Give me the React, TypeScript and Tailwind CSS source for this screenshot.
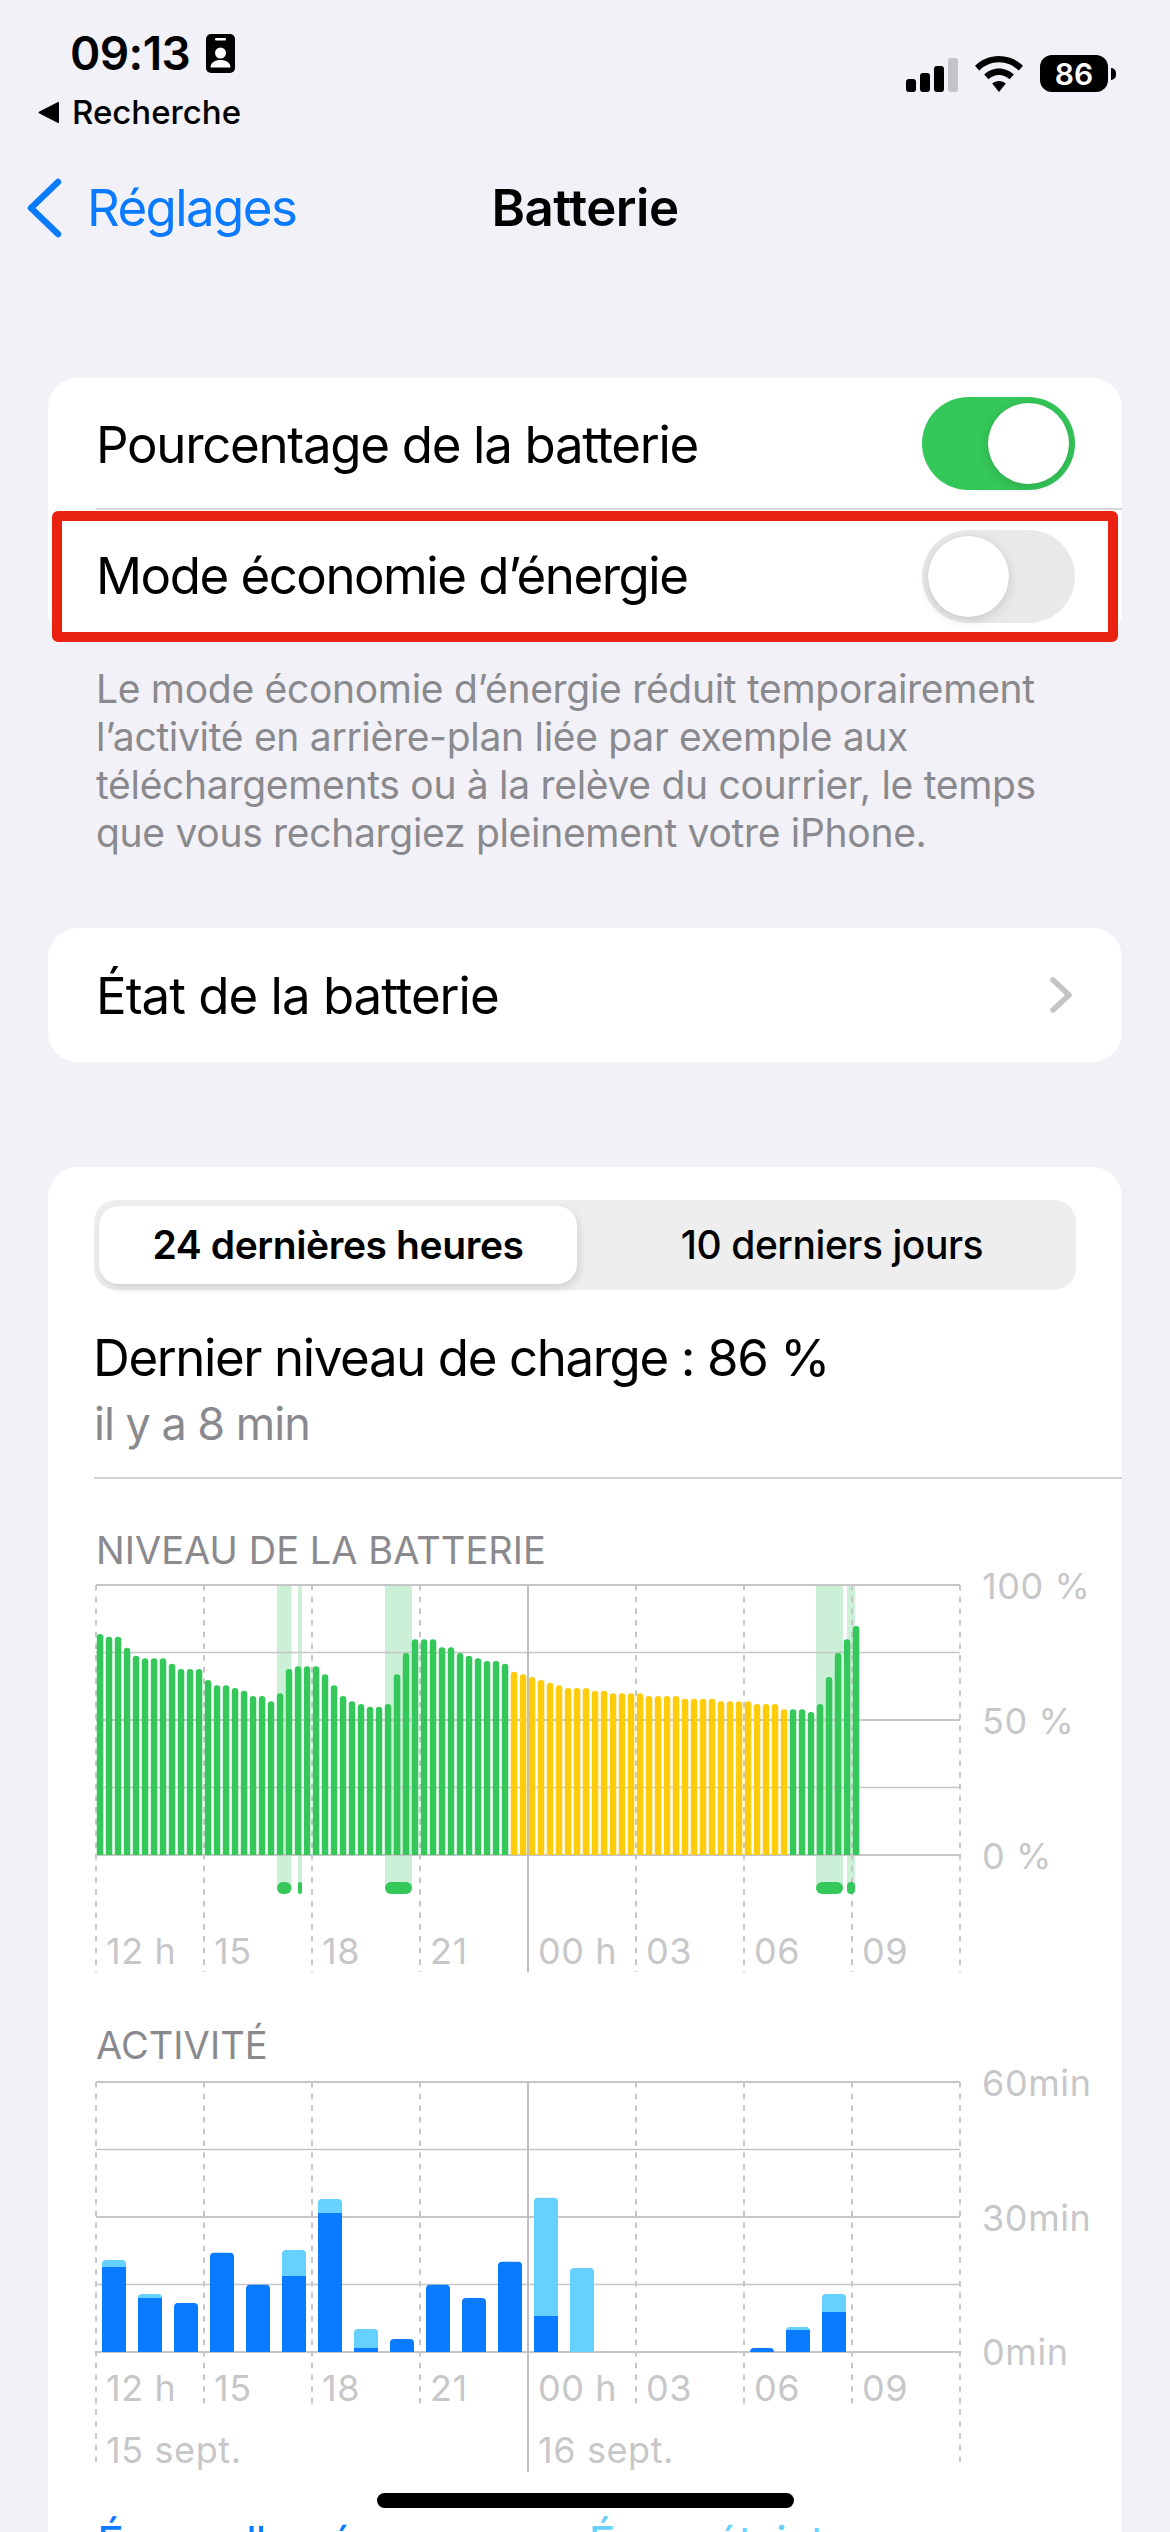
import React from 'react';

const BATTERY_TOPS = [
  342, 350, 350, 383, 407, 415, 415, 415, 431, 447, 447, 447, 480, 496, 496, 504, 512, 528, 528, 544, 520, 447, 439, 439,
  439, 463, 496, 528, 544, 552, 560, 560, 552, 463, 399, 358, 358, 358, 382, 382, 399, 407, 415, 423, 423, 431,
  455, 463, 471, 480, 488, 496, 504, 504, 504, 512, 512, 520, 520, 520, 520, 528, 528, 528, 528, 536, 536, 536, 536, 544,
  544, 544, 544, 552, 552, 552, 568,
  568, 568, 576, 552, 471, 399, 358, 318,
];

// [index, dark top, light top] in crop pixels, baseline is 905
const ACTIVITY: [number, number, number | null][] = [
  [0, 651, 630], [1, 744, 732], [2, 759, null], [3, 608, null], [4, 704, null], [5, 678, 600], [6, 489, 447],
  [7, 894, 837], [8, 867, null], [9, 704, null], [10, 744, null], [11, 635, null], [12, 798, 443], [13, 905, 654],
  [18, 894, null], [19, 840, 831], [20, 786, 732],
];

const CHARGING = [[277, 291.5], [298, 302], [385, 412], [816, 843], [847, 855]];
const HOURS = ['12 h', '15', '18', '21', '00 h', '03', '06', '09'];

const topRounded = (x: number, w: number, top: number, bottom: number, r: number) =>
  `M${x} ${bottom}V${top + r}A${r} ${r} 0 0 1 ${x + r} ${top}H${x + w - r}A${r} ${r} 0 0 1 ${x + w} ${top + r}V${bottom}Z`;

const Toggle = ({ on }: { on: boolean }) => (
  <div className={`flex h-[93px] w-[153px] items-center rounded-full p-[6px] ${on ? 'justify-end bg-[#34c759]' : 'justify-start bg-[#e9e9ea]'}`}>
    <div className="h-[81px] w-[81px] rounded-full bg-white shadow-[0_3px_12px_rgba(0,0,0,0.14),0_0_1px_rgba(0,0,0,0.1)]" />
  </div>
);

const StatusBar = () => (
  <div className="flex h-[160px] items-start justify-between">
    <div className="flex flex-col">
      <div className="ml-[70px] mt-[28px] flex items-center gap-[16px]">
        <span className="text-[46px] font-semibold leading-[50px] tracking-[-0.6px] text-black">09:13</span>
        <svg width="29" height="39" viewBox="0 0 29 39">
          <rect width="29" height="39" rx="5" fill="#000" />
          <rect x="9" y="4" width="11" height="2.5" rx="1.2" fill="#fff" />
          <circle cx="14.5" cy="19" r="5.5" fill="#fff" />
          <path d="M4.5 33.5c0-5 4.500-7.500 10-7.500s10 2.500 10 7.500z" fill="#fff" />
        </svg>
      </div>
      <div className="ml-[38px] mt-[14px] flex items-center gap-[12px]">
        <svg width="22" height="21" viewBox="0 0 22 21">
          <path d="M21 1v19a1 1 0 0 1-1.500.8L1 11.200a1 1 0 0 1 0-1.500L19.500.2A1 1 0 0 1 21 1z" fill="#000" />
        </svg>
        <span className="text-[33px] font-medium leading-[40px] tracking-[0px] text-black">Recherche</span>
      </div>
    </div>
    <div className="mr-[54px] mt-[55px] flex items-center">
      <div className="flex h-[36px] items-end gap-[4px]">
        <div className="h-[13px] w-[10px] rounded-[3px] bg-black" />
        <div className="h-[19px] w-[10px] rounded-[3px] bg-black" />
        <div className="h-[26px] w-[10px] rounded-[3px] bg-black" />
        <div className="h-[34px] w-[10px] rounded-[3px] bg-[#c4c3c9]" />
      </div>
      <svg className="ml-[17px]" width="48" height="36" viewBox="0 0 48 36">
        <path d="M24 0C33.500 0 42 3.800 48 9.800L43.800 14.600C38.600 9.500 31.700 6.300 24 6.300S9.400 9.500 4.200 14.600L0 9.800C6 3.800 14.500 0 24 0Z" />
        <path d="M24 12.500C29.800 12.500 35 14.900 38.800 18.600L34.500 23.300C31.800 20.800 28.100 19.100 24 19.100S16.200 20.800 13.500 23.300L9.200 18.600C13 14.900 18.200 12.500 24 12.500Z" />
        <path d="M24 25C26.600 25 29 26 30.800 27.600L24 36L17.200 27.600C19 26 21.400 25 24 25Z" />
      </svg>
      <div className="ml-[17px] flex h-[37px] w-[68px] items-center justify-center rounded-[12px] bg-black">
        <span className="text-[30px] font-semibold leading-none text-white">86</span>
      </div>
      <div className="ml-[3px] h-[12px] w-[5px] rounded-r-full bg-black" />
    </div>
  </div>
);

const NavBar = () => (
  <div className="grid h-[96px] grid-cols-[1fr_auto_1fr] items-center">
    <div className="flex items-center">
      <svg className="ml-[26px]" width="38" height="60" viewBox="0 0 38 60">
        <path d="M32 4L5 30L32 56" fill="none" stroke="#0a7aff" strokeWidth="6.500" strokeLinecap="round" strokeLinejoin="round" />
      </svg>
      <span className="ml-[23px] text-[51px] leading-[60px] tracking-[-1.6px] text-[#0a7aff]">Réglages</span>
    </div>
    <span className="text-[51px] font-semibold leading-[60px] tracking-[-0.5px] text-black">Batterie</span>
    <div />
  </div>
);

const Grid = ({ top, step, hourEnd, dateEnd, solidEnd }: { top: number; step: number; hourEnd: number; dateEnd: number; solidEnd: number }) => (
  <g>
    {[0, 1, 2, 3, 4].map((i) => (
      <line key={i} x1="96" x2="960" y1={top + step * i} y2={top + step * i} stroke="#c6c6c8" strokeWidth={i % 2 === 0 ? 2 : 1.5} />
    ))}
    {[96, 204, 312, 420, 636, 744, 852, 960].map((x) => {
      const end = x === 96 || x === 960 ? dateEnd : hourEnd;
      return <line key={x} x1={x} x2={x} y1={top} y2={end} stroke="#c6c6c8" strokeWidth="2" strokeDasharray="5.500 6.200" />;
    })}
    <line x1="528" x2="528" y1={top} y2={solidEnd} stroke="#bfbfc1" strokeWidth="2" />
  </g>
);

const HourLabels = ({ y }: { y: number }) => (
  <g className="fill-[#c7c7c9] text-[36px] tracking-[0.6px]">
    {HOURS.map((label, i) => (
      <text key={label} x={106 + 108 * i} y={y}>
        {label}
      </text>
    ))}
  </g>
);

const BatteryChart = () => (
  <svg className="block overflow-visible" width="1074" height="392" viewBox="48 1580 1074 392">
    {CHARGING.map(([a, b]) => (
      <rect key={a} x={a} y="1585" width={b - a} height="303" fill="#ccefd7" />
    ))}
    <Grid top={1585} step={67.5} hourEnd={1972} dateEnd={1972} solidEnd={1972} />
    {BATTERY_TOPS.map((t, i) => {
      const top = 1520 + t / 3;
      const yellow = i >= 46 && i < 77;
      return <path key={i} d={topRounded(96.8 + 9 * i, 6.500, top, 1855, 3.200)} fill={yellow ? '#ffcc0a' : '#34c759'} />;
    })}
    {CHARGING.map(([a, b]) => (
      <rect key={a} x={a} y="1882" width={b - a} height="12" rx={Math.min(6, (b - a) / 2)} fill="#34c759" />
    ))}
    <HourLabels y={1964} />
    <g className="fill-[#c7c7c9] text-[36px] tracking-[0.6px]">
      <text x="982" y="1599">100 %</text>
      <text x="982" y="1734">50 %</text>
      <text x="982" y="1869">0 %</text>
    </g>
  </svg>
);

const ActivityChart = () => (
  <svg className="block overflow-visible" width="1074" height="400" viewBox="48 2075 1074 400">
    <Grid top={2082} step={67.5} hourEnd={2406} dateEnd={2466} solidEnd={2472} />
    {ACTIVITY.map(([i, dark, light]) => {
      const x = 102 + 36 * i;
      const darkTop = 2050 + dark / 3;
      const lightTop = light === null ? null : 2050 + light / 3;
      return (
        <g key={i}>
          {lightTop !== null && <path d={topRounded(x, 24, lightTop, 2352, 4)} fill="#66d1ff" />}
          {dark < 905 &&
            (lightTop !== null ? (
              <rect x={x} y={darkTop} width="24" height={2352 - darkTop} fill="#0a7aff" />
            ) : (
              <path d={topRounded(x, 24, darkTop, 2352, 4)} fill="#0a7aff" />
            ))}
        </g>
      );
    })}
    <HourLabels y={2401} />
    <g className="fill-[#c7c7c9] text-[36px] tracking-[0.6px]">
      <text x="982" y="2096">60min</text>
      <text x="982" y="2231">30min</text>
      <text x="982" y="2365">0min</text>
      <text x="106" y="2463">15 sept.</text>
      <text x="538" y="2463">16 sept.</text>
    </g>
  </svg>
);

const App = () => (
  <div className="relative h-[2532px] w-[1170px] overflow-hidden bg-[#f2f1f7] [font-family:Inter,sans-serif]">
    <StatusBar />
    <NavBar />

    <div className="relative ml-[48px] mt-[122px] h-[264px] w-[1074px] rounded-[30px] bg-white">
      <div className="ml-[48px] flex h-[132px] items-center justify-between border-b-2 border-[#d8d8da] pr-[47px]">
        <span className="pt-[3px] text-[51px] leading-[60px] tracking-[-1.3px] text-black">Pourcentage de la batterie</span>
        <Toggle on />
      </div>
      <div className="ml-[48px] flex h-[132px] items-center justify-between pr-[47px]">
        <span className="text-[51px] leading-[60px] tracking-[-1.5px] text-black">Mode économie d’énergie</span>
        <Toggle on={false} />
      </div>
      <div className="absolute left-[4px] top-[133px] h-[131px] w-[1066px] rounded-[6px] border-[10px] border-[#ea2210]" />
    </div>

    <p className="ml-[96px] mt-[23px] w-[960px] text-[39px] leading-[48px] tracking-[-0.3px] text-[#8a8a8e]">
      Le mode économie d’énergie réduit temporairement
      <br />
      l’activité en arrière-plan liée par exemple aux
      <br />
      téléchargements ou à la relève du courrier, le temps
      <br />
      que vous rechargiez pleinement votre iPhone.
    </p>

    <div className="ml-[48px] mt-[71px] flex h-[134px] w-[1074px] items-center justify-between rounded-[30px] bg-white pl-[48px] pr-[49px]">
      <span className="pt-[2px] text-[51px] leading-[60px] tracking-[-1px] text-black">État de la batterie</span>
      <svg width="24" height="38" viewBox="0 0 24 38">
        <path d="M4 4L20 19L4 34" fill="none" stroke="#c4c4c7" strokeWidth="5.500" strokeLinecap="round" strokeLinejoin="round" />
      </svg>
    </div>

    <div className="ml-[48px] mt-[105px] w-[1074px] rounded-[30px] bg-white pt-[33px]">
      <div className="ml-[46px] flex h-[90px] w-[982px] items-center rounded-[22px] bg-[#eeeeef] pl-[5px]">
        <div className="flex h-[78px] w-[478px] items-center justify-center rounded-[20px] bg-white shadow-[2px_4px_8px_rgba(0,0,0,0.12)]">
          <span className="text-[39px] font-semibold leading-[48px] tracking-[-0.4px] text-black">24 dernières heures</span>
        </div>
        <div className="flex flex-1 items-center justify-center pl-[11px]">
          <span className="text-[39px] font-medium leading-[48px] tracking-[-0.45px] text-black">10 derniers jours</span>
        </div>
      </div>

      <div className="ml-[45px] mt-[38px] text-[51px] leading-[60px] tracking-[-1.4px] text-black">Dernier niveau de charge : 86 %</div>
      <div className="ml-[46px] mt-[9px] text-[45px] leading-[54px] tracking-[-1px] text-[#8a8a8e]">il y a 8 min</div>
      <div className="ml-[46px] mt-[26px] border-b-2 border-[#d1d1d3]" />

      <div className="ml-[48px] mt-[47px] text-[38px] leading-[48px] tracking-[0.05px] text-[#8a8a8e]">NIVEAU DE LA BATTERIE</div>
      <div className="mt-[6px]">
        <BatteryChart />
      </div>

      <div className="ml-[48px] mt-[49px] text-[38px] leading-[48px] tracking-[0.05px] text-[#8a8a8e]">ACTIVITÉ</div>
      <div className="mt-[6px]">
        <ActivityChart />
      </div>

      <div className="ml-[49px] mt-[41px] flex gap-[236px] text-[45px] leading-[54px] tracking-[-1.5px]">
        <span className="text-[#0a7aff]">Écran allumé</span>
        <span className="text-[#66d1ff]">Écran éteint</span>
      </div>
    </div>

    <div className="absolute bottom-[24px] left-[377px] h-[15px] w-[417px] rounded-full bg-black" />
  </div>
);

export default App;
